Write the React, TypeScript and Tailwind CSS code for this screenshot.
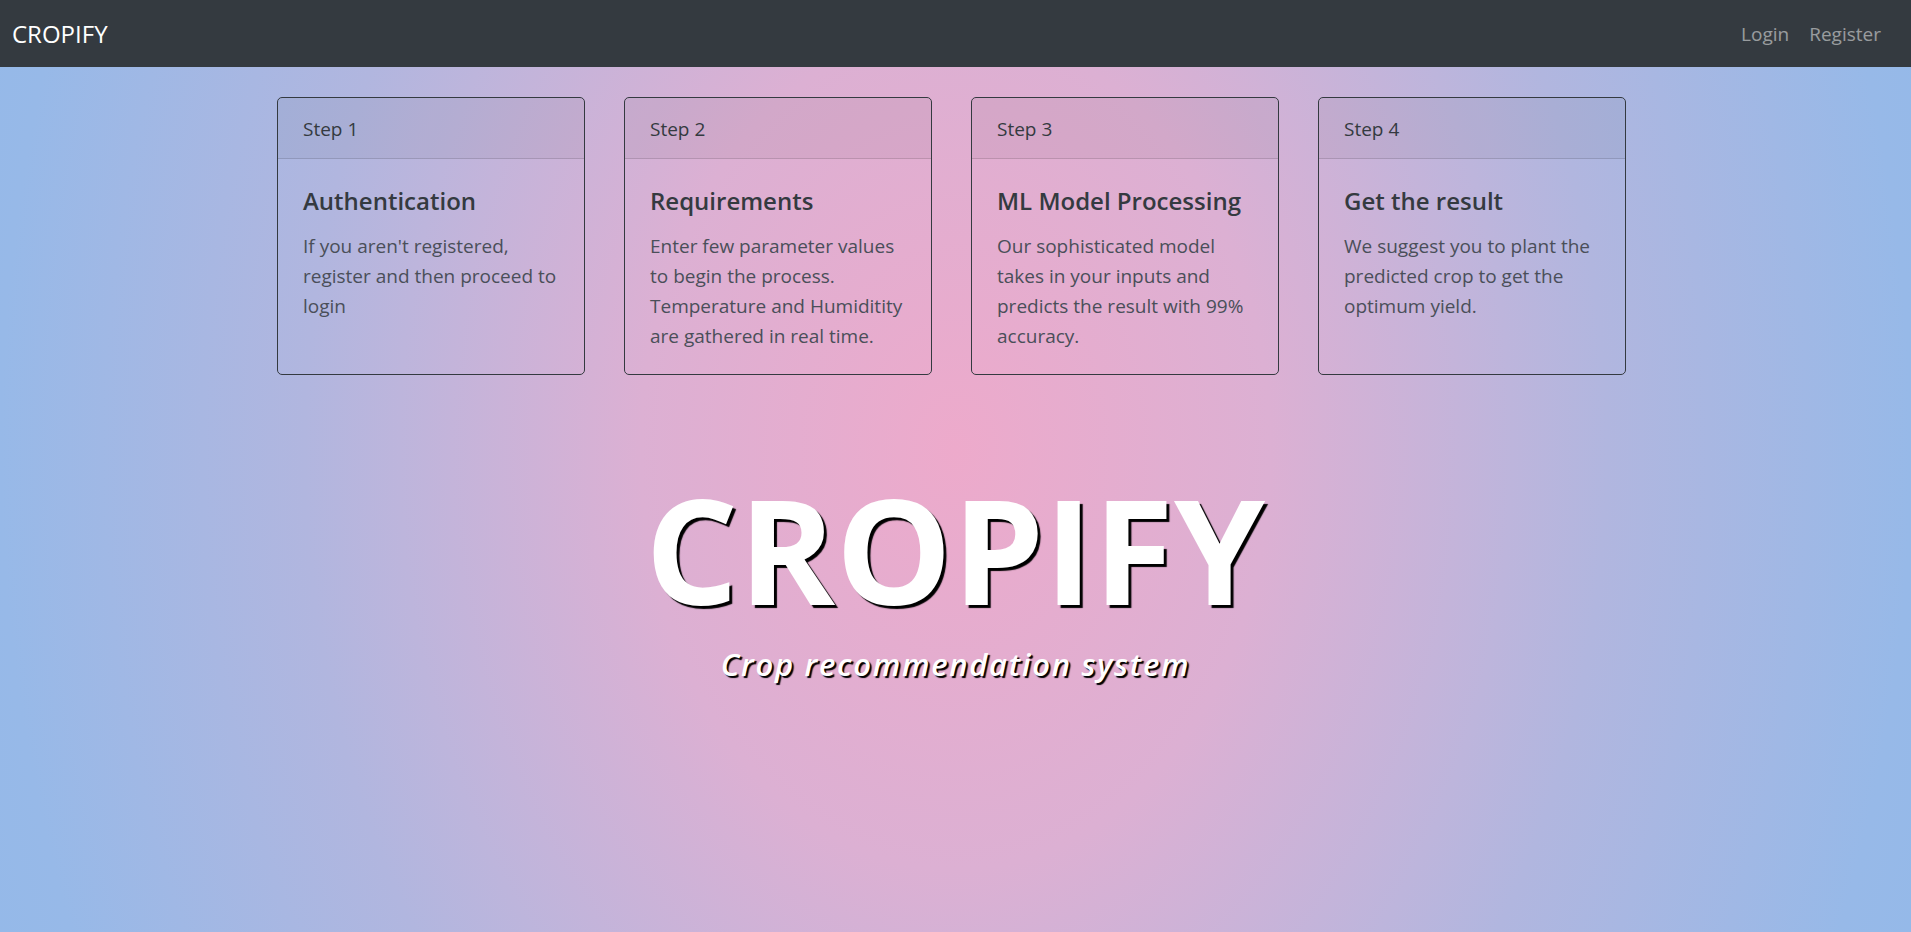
const steps = [
  {
    step: 'Step 1',
    title: 'Authentication',
    text: "If you aren't registered, register and then proceed to login",
  },
  {
    step: 'Step 2',
    title: 'Requirements',
    text: 'Enter few parameter values to begin the process. Temperature and Humiditity are gathered in real time.',
  },
  {
    step: 'Step 3',
    title: 'ML Model Processing',
    text: 'Our sophisticated model takes in your inputs and predicts the result with 99% accuracy.',
  },
  {
    step: 'Step 4',
    title: 'Get the result',
    text: 'We suggest you to plant the predicted crop to get the optimum yield.',
  },
];

export default function App() {
  return (
    <div className="min-h-screen w-full font-['Open_Sans',sans-serif] bg-[radial-gradient(ellipse_1050px_1400px_at_50%_450px,#edaacb_0%,#dcb0d3_30%,#bdb5dc_53%,#b1b6df_62%,#97b9e8_91%,#94b9e9_100%)]">
      {/* Navbar */}
      <nav className="flex h-[67px] items-center justify-between bg-[#343a40] pl-3 pr-5">
        <a className="text-[24px] leading-[30px] text-white">CROPIFY</a>
        <div className="flex items-center">
          <a className="px-[10px] text-[19px] leading-[30px] text-white/50">Login</a>
          <a className="px-[10px] text-[19px] leading-[30px] text-white/50">Register</a>
        </div>
      </nav>

      {/* Steps */}
      <div className="mt-[30px] flex gap-[39px] pl-[277px]">
        {steps.map((s) => (
          <div
            key={s.step}
            className="flex w-[308px] flex-col rounded-[5px] border border-[#343a40]"
          >
            <div className="rounded-t-[4px] border-b border-black/[0.13] bg-black/[0.045] px-[25px] pt-[16px] pb-[14px] text-[19px] leading-[30px] text-[#343a40]">
              {s.step}
            </div>
            <div className="px-[25px] pt-[27px] pb-[23px]">
              <h5 className="mb-[15px] text-[24px] font-semibold leading-[30px] text-[#343a40]">
                {s.title}
              </h5>
              <p className="text-[19px] leading-[30px] text-[#4a4f59]">{s.text}</p>
            </div>
          </div>
        ))}
      </div>

      {/* Hero */}
      <div className="mt-[86px] flex flex-col items-center">
        <h1 className="text-[146px] font-bold leading-[1.2] tracking-[0.5px] text-white [text-shadow:3px_3px_1px_#000]">
          CROPIFY
        </h1>
        <p className="mt-[10px] text-[31px] font-semibold italic leading-[1.2] tracking-[1.7px] text-white [text-shadow:2px_2px_1px_#000]">
          Crop recommendation system
        </p>
      </div>
    </div>
  );
}
